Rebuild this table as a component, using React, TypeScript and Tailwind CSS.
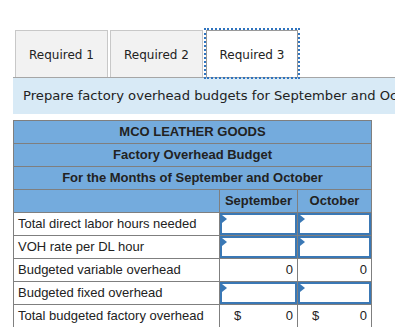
import React from "react";

const rows = [
  { label: "Total direct labor hours needed", kind: "input" },
  { label: "VOH rate per DL hour", kind: "input" },
  { label: "Budgeted variable overhead", kind: "value" },
  { label: "Budgeted fixed overhead", kind: "input" },
  { label: "Total budgeted factory overhead", kind: "total" },
];

const InputCell = () => (
  <td className="border border-[#7f7f7f] p-0 h-[23px]">
    <div className="relative h-[22px] border-2 border-[#3a78b5] bg-white">
      <span className="absolute left-0 top-0 w-0 h-0 border-y-[4px] border-y-transparent border-l-[5px] border-l-[#3a78b5]" />
    </div>
  </td>
);

const ValueCell = ({ dollar, bottom }: { dollar?: boolean; bottom?: boolean }) => (
  <td
    className={`border border-[#7f7f7f] px-[4px] h-[23px] ${
      bottom ? "border-b-2 border-b-[#111]" : ""
    }`}
  >
    <div className="flex justify-between">
      <span className="pl-[10px]">{dollar ? "$" : ""}</span>
      <span>0</span>
    </div>
  </td>
);

export default function App() {
  return (
    <div className="w-[395px] h-[327px] overflow-hidden bg-white">
      <div className="flex pt-[30px] pl-[15px] font-['DejaVu_Sans',sans-serif] text-[12px] text-[#222]">
        <div className="w-[93px] h-[47px] pt-[2px] flex items-center justify-center bg-[#f2f2f2] border border-b-0 border-[#c8c8c8]">
          Required 1
        </div>
        <div className="ml-[2px] w-[93px] h-[47px] pt-[2px] flex items-center justify-center bg-[#f2f2f2] border border-b-0 border-[#c8c8c8]">
          Required 2
        </div>
        <div className="ml-[3px] w-[92px] h-[47px] pt-[2px] flex items-center justify-center bg-white border border-b-0 border-[#9a9a9a] outline-2 outline-dotted outline-[#2f74bf] relative z-10">
          Required 3
        </div>
      </div>
      <div className="ml-[13px] h-[37px] bg-[#d8eaf6] border-t border-[#a6a6a6] flex items-center pl-[10px] whitespace-nowrap overflow-hidden font-['DejaVu_Sans',sans-serif] text-[13.15px] text-[#222]">
        Prepare factory overhead budgets for September and October.
      </div>

      <table className="mt-[6px] ml-[13px] w-[358px] border-collapse font-['Liberation_Sans',Arial,sans-serif] text-[13px] text-[#222] table-fixed">
        <colgroup>
          <col className="w-[206px]" />
          <col className="w-[78px]" />
          <col className="w-[74px]" />
        </colgroup>
        <tbody>
          {["MCO LEATHER GOODS", "Factory Overhead Budget", "For the Months of September and October"].map((t) => (
            <tr key={t} className="h-[23px]">
              <td colSpan={3} className="border border-[#7f7f7f] bg-[#74abdd] text-center font-bold p-0">
                {t}
              </td>
            </tr>
          ))}
          <tr className="h-[23px]">
            <td className="border border-[#7f7f7f] bg-[#74abdd]" />
            <td className="border border-[#7f7f7f] bg-[#74abdd] text-center font-bold p-0">September</td>
            <td className="border border-[#7f7f7f] bg-[#74abdd] text-center font-bold p-0">October</td>
          </tr>
          {rows.map((r) => (
            <tr key={r.label} className="h-[23px]">
              <td className="border border-[#7f7f7f] pl-[4px] py-0">{r.label}</td>
              {r.kind === "input" ? (
                <>
                  <InputCell />
                  <InputCell />
                </>
              ) : (
                <>
                  <ValueCell dollar={r.kind === "total"} bottom={r.kind === "total"} />
                  <ValueCell dollar={r.kind === "total"} bottom={r.kind === "total"} />
                </>
              )}
            </tr>
          ))}
        </tbody>
      </table>
    </div>
  );
}
